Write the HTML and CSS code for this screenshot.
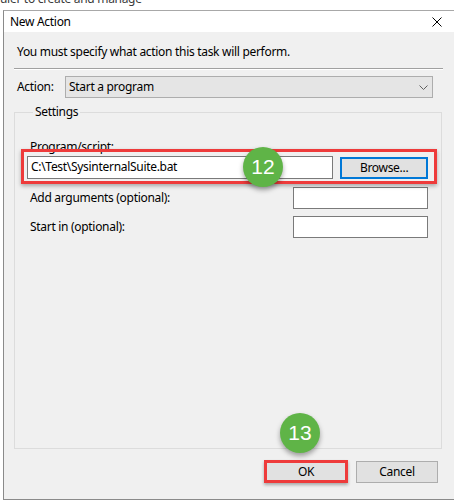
FILE: index.html
```html
<!DOCTYPE html>
<html>
<head>
<meta charset="utf-8">
<link rel="stylesheet" href="styles.css">
</head>
<body>
<div class="behind"><span>uler to create and manage</span></div>
<div class="dialog">
  <div class="titlebar">
    <span class="title">New Action</span>
    <svg class="close" width="10" height="10" viewBox="0 0 10 10"><path d="M0.5 0.5 L9.5 9.5 M9.5 0.5 L0.5 9.5" stroke="#000" stroke-width="1" fill="none"/></svg>
  </div>
  <div class="body">
    <p class="msg">You must specify what action this task will perform.</p>
    <div class="sep"></div>
    <div class="action-row">
      <span class="action-label">Action:</span>
      <div class="select">
        <span>Start a program</span>
        <svg class="chev" width="9" height="5" viewBox="0 0 9 5"><path d="M0.5 0.5 L4.5 4.5 L8.5 0.5" stroke="#606060" stroke-width="1" fill="none"/></svg>
      </div>
    </div>
    <fieldset class="settings">
      <legend>Settings</legend>
      <div class="field-label">Program/script:</div>
      <div class="prog-row">
        <div class="input prog-input">C:\Test\SysinternalSuite.bat</div>
        <div class="btn browse">Browse...</div>
      </div>
      <div class="opt-row first">
        <span class="opt-label">Add arguments (optional):</span>
        <div class="input small"></div>
      </div>
      <div class="opt-row">
        <span class="opt-label">Start in (optional):</span>
        <div class="input small"></div>
      </div>
    </fieldset>
    <div class="buttons">
      <div class="btn ok">OK</div>
      <div class="btn cancel">Cancel</div>
    </div>
  </div>
  <div class="annot-box"></div>
  <div class="badge badge-12">12</div>
  <div class="badge badge-13">13</div>
</div>
</body>
</html>
```
FILE: styles.css
```css
* { box-sizing: border-box; }
html, body { margin: 0; padding: 0; background: #ffffff; }
body {
  width: 454px;
  height: 502px;
  overflow: hidden;
  font-family: "Noto Sans", "Open Sans", sans-serif;
  font-size: 12px;
  letter-spacing: -0.3px;
  color: #000;
}
.behind {
  height: 10px;
  overflow: hidden;
  line-height: 12px;
  color: #3a3a3a;
}
.behind span {
  display: block;
  margin-top: -7px;
}
.dialog {
  position: relative;
  margin-left: 3px;
  width: 451px;
  height: 490px;
  border: 1px solid #8a8a8a;
  border-top-color: #a8a8a8;
  border-right: none;
  display: flex;
  flex-direction: column;
}
.titlebar {
  height: 21px;
  background: #ffffff;
  display: flex;
  align-items: center;
  justify-content: space-between;
  padding: 0 12px 0 6px;
  line-height: 16px;
}
.close { display: block; }
.body {
  flex: 1;
  background: #f0f0f0;
  display: flex;
  flex-direction: column;
  padding: 0 11px 0 10px;
  line-height: 16px;
}
.msg {
  margin: 12px 0 0 0;
  padding-left: 3px;
  color: #000;
}
.sep {
  margin-top: 8px;
  height: 2px;
  border-top: 1px solid #a0a0a0;
  border-bottom: 1px solid #ffffff;
}
.action-row {
  margin-top: 6px;
  display: flex;
  align-items: center;
  padding-left: 3px;
  padding-right: 10px;
}
.action-label { width: 48px; }
.select {
  flex: 1;
  height: 22px;
  background: #e5e5e5;
  border: 1px solid #adadad;
  display: flex;
  align-items: center;
  justify-content: space-between;
  padding: 0 4px 0 3px;
}
.settings {
  flex: 1;
  margin: 6px 1px 0 0;
  min-width: 0;
  border: 1px solid #dcdcdc;
  padding: 0 13px 0 12px;
}
.settings legend {
  margin-left: 6px;
  padding: 0 2px;
  line-height: 16px;
}
.field-label {
  margin-top: 19px;
  padding-left: 3px;
}
.prog-row {
  margin-top: 1px;
  display: flex;
  align-items: center;
  gap: 7px;
}
.input {
  background: #ffffff;
  border: 1px solid #7a7a7a;
  height: 22px;
  padding: 2px 3px;
  white-space: nowrap;
}
.prog-input {
  width: 307px;
  height: 23px;
}
.btn {
  background: #e1e1e1;
  border: 1px solid #adadad;
  display: flex;
  align-items: center;
  justify-content: center;
}
.browse {
  width: 88px;
  height: 22px;
  border: 2px solid #0078d7;
}
.opt-row {
  margin-top: 7px;
  display: flex;
  align-items: center;
  justify-content: space-between;
  padding-left: 3px;
}
.opt-row.first { margin-top: 8px; }
.input.small { width: 135px; }
.buttons {
  margin: 11px 5px 16px 0;
  display: flex;
  justify-content: flex-end;
  align-items: flex-end;
  gap: 8px;
}
.ok {
  width: 84px;
  height: 23px;
  border: 3px solid #ee3b3b;
  box-shadow: 0 2px 3px rgba(0,0,0,0.3);
}
.cancel {
  width: 82px;
  height: 22px;
}
.annot-box {
  position: absolute;
  left: 17px;
  top: 138px;
  width: 416px;
  height: 35px;
  border: 3px solid #ee3b3b;
  box-shadow: 0 2px 4px rgba(0,0,0,0.3);
}
.badge {
  position: absolute;
  width: 40px;
  height: 40px;
  border-radius: 50%;
  background: #5fb447;
  color: #ffffff;
  font-family: "Liberation Sans", Arial, sans-serif;
  font-size: 21px;
  letter-spacing: 0;
  display: flex;
  align-items: center;
  justify-content: center;
  box-shadow: 0 3px 5px rgba(0,0,0,0.35);
}
.badge-12 { left: 239px; top: 136px; }
.badge-13 { left: 276px; top: 402px; }
```
